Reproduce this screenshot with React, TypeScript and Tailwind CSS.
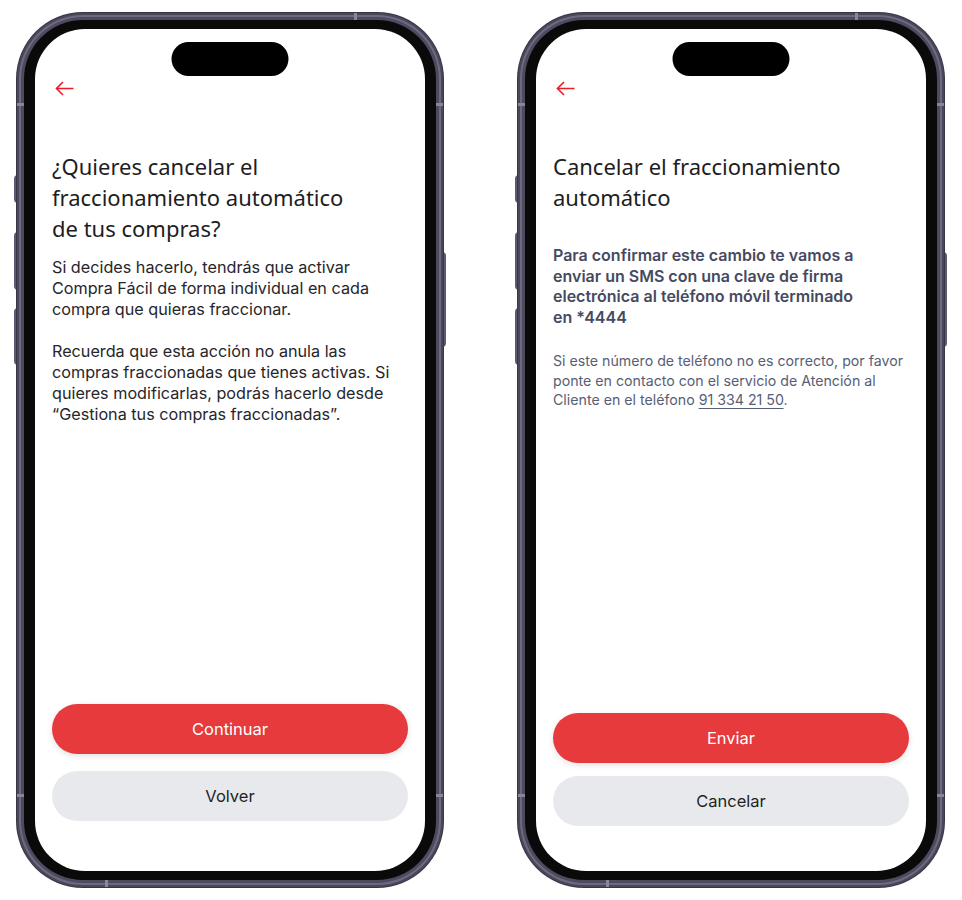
import type { ReactNode } from "react"

function BackArrow() {
    return (
        <svg width="19" height="15" viewBox="0 0 19 15" fill="none" stroke="#ec1c24" strokeWidth="1.6">
            <path d="M1.5 7.5 H18.5" />
            <path d="M8 1 L1.5 7.5 L8 14" />
        </svg>
    )
}

function Phone({ children }: { children: ReactNode }) {
    return (
        <div className="relative w-[426px] h-[874px] shrink-0">
            {/* side buttons */}
            <div className="absolute left-[-3px] top-[162px] w-[4px] h-[28px] rounded-l-sm bg-[#5e5972]" />
            <div className="absolute left-[-3px] top-[219px] w-[4px] h-[58px] rounded-l-sm bg-[#5e5972]" />
            <div className="absolute left-[-3px] top-[295px] w-[4px] h-[57px] rounded-l-sm bg-[#5e5972]" />
            <div className="absolute right-[-3px] top-[239px] w-[4px] h-[95px] rounded-r-sm bg-[#5e5972]" />

            <div className="relative h-full rounded-[66px] bg-[#4b4659] p-[2px] shadow-[0_0_0_1px_#3a3646]">
                <div className="h-full rounded-[64px] bg-[#6e6981] p-[2px]">
                    <div className="h-full rounded-[62px] bg-[#4f4a5e] p-[3px]">
                        <div className="h-full rounded-[59px] bg-[#0a0a0b] px-[11px] py-[9px]">
                            <div className="relative h-full rounded-[50px] bg-white overflow-hidden flex flex-col">
                                <div className="absolute left-1/2 -translate-x-1/2 top-[13px] w-[117px] h-[34px] rounded-full bg-black" />
                                {children}
                            </div>
                        </div>
                    </div>
                </div>
            </div>

            {/* antenna marks */}
            <div className="absolute top-0 left-[337px] w-[3px] h-[7px] bg-[#8a8599]" />
            <div className="absolute left-0 top-[90px] w-[7px] h-[3px] bg-[#8a8599]" />
            <div className="absolute right-0 top-[90px] w-[7px] h-[3px] bg-[#8a8599]" />
            <div className="absolute left-0 top-[781px] w-[7px] h-[3px] bg-[#8a8599]" />
            <div className="absolute right-0 top-[781px] w-[7px] h-[3px] bg-[#8a8599]" />
            <div className="absolute bottom-0 left-[88px] w-[3px] h-[7px] bg-[#8a8599]" />
        </div>
    )
}

function PrimaryButton({ label }: { label: string }) {
    return (
        <button className="h-[50px] w-full rounded-full bg-[#e63a3c] text-white text-[16.5px] shadow-[0_2px_6px_rgba(0,0,0,0.12)]">
            { label }
        </button>
    )
}

function SecondaryButton({ label }: { label: string }) {
    return (
        <button className="h-[50px] w-full rounded-full bg-[#e8e9ed] text-[#1f1f24] text-[16.5px]">
            { label }
        </button>
    )
}

function App() {
    const titleFont = "font-['Noto_Sans',sans-serif]"
    const bodyFont = "font-['Inter',sans-serif]"

    return (
        <div className={`flex gap-[75px] pl-[17px] pt-[13px] min-h-[900px] bg-white ${bodyFont}`}>
            <Phone>
                <div className="flex flex-col h-full px-[17px] pb-[50px]">
                    <div className="pt-[52px] pl-[3px] h-[66px]">
                        <BackArrow />
                    </div>
                    <h1 className={`mt-[56px] text-[22px] leading-[31px] text-[#1d1d22] ${titleFont}`}>
                        ¿Quieres cancelar el<br />fraccionamiento automático<br />de tus compras?
                    </h1>
                    <div className="mt-[13px] text-[16.2px] leading-[21px] text-[#26262b]">
                        <p>Si decides hacerlo, tendrás que activar<br />Compra Fácil de forma individual en cada<br />compra que quieras fraccionar.</p>
                        <p className="mt-[21px]">Recuerda que esta acción no anula las<br />compras fraccionadas que tienes activas. Si<br />quieres modificarlas, podrás hacerlo desde<br />“Gestiona tus compras fraccionadas”.</p>
                    </div>
                    <div className="flex-1" />
                    <div className="flex flex-col gap-[17px]">
                        <PrimaryButton label="Continuar" />
                        <SecondaryButton label="Volver" />
                    </div>
                </div>
            </Phone>

            <Phone>
                <div className="flex flex-col h-full px-[17px] pb-[45px]">
                    <div className="pt-[52px] pl-[3px] h-[66px]">
                        <BackArrow />
                    </div>
                    <h1 className={`mt-[56px] text-[22px] leading-[31px] text-[#1d1d22] ${titleFont}`}>
                        Cancelar el fraccionamiento<br />automático
                    </h1>
                    <p className="mt-[32px] text-[16px] leading-[20.5px] font-semibold text-[#454a60]">
                        Para confirmar este cambio te vamos a<br />enviar un SMS con una clave de firma<br />electrónica al teléfono móvil terminado<br />en *4444
                    </p>
                    <p className="mt-[24px] text-[14.2px] leading-[19.5px] text-[#585e75]">
                        Si este número de teléfono no es correcto, por favor<br />ponte en contacto con el servicio de Atención al<br />Cliente en el teléfono <span className="underline underline-offset-[3px]">91 334 21 50</span>.
                    </p>
                    <div className="flex-1" />
                    <div className="flex flex-col gap-[13px]">
                        <PrimaryButton label="Enviar" />
                        <SecondaryButton label="Cancelar" />
                    </div>
                </div>
            </Phone>
        </div>
    )
}

export default App
